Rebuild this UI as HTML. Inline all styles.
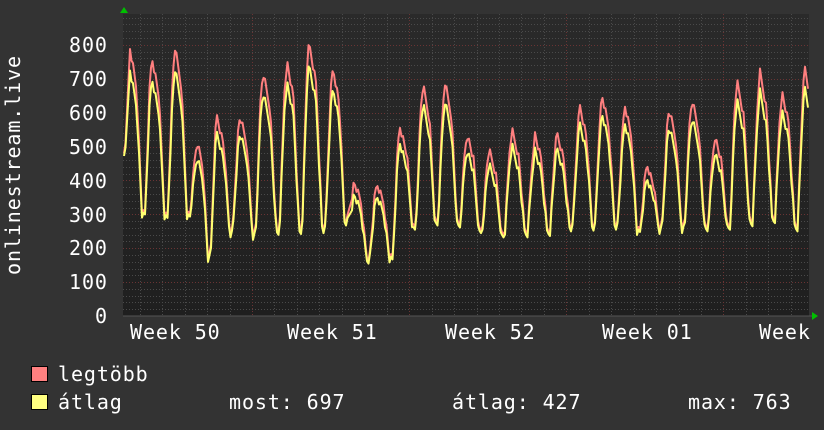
<!DOCTYPE html>
<html><head><meta charset="utf-8">
<style>
html,body{margin:0;padding:0;background:#333;}
body{width:824px;height:430px;overflow:hidden;position:relative;font-family:"DejaVu Sans Mono","Liberation Mono",monospace;color:#fff;}
.t{position:absolute;font-size:20px;line-height:20px;white-space:pre;letter-spacing:0.9px;}
.box{position:absolute;width:15px;height:14px;border:1px solid #000;}
</style></head><body>
<svg id="g" width="824" height="430" style="position:absolute;left:0;top:0">
<defs><linearGradient id="bg" x1="0" y1="0" x2="0" y2="1"><stop offset="0" stop-color="#2a2a2a"/><stop offset="1" stop-color="#1f1f1f"/></linearGradient></defs>
<rect x="123" y="14" width="686" height="302" fill="url(#bg)"/>
<g id="grid"></g>
<path id="red" fill="none" stroke="#ff7f7f" stroke-width="2" stroke-linejoin="round"/>
<path id="yel" fill="none" stroke="#ffff70" stroke-width="2" stroke-linejoin="round"/>
<line x1="123" y1="316" x2="812" y2="316" stroke="#555" stroke-width="1"/>
<polygon points="120,13 128,13 124,7" fill="#00c000"/>
<polygon points="812,312 812,320 818,316" fill="#00c000"/>
</svg>
<div class="t" style="left:3px;top:275px;transform:rotate(-90deg);transform-origin:0 0;">onlinestream.live</div>
<div class="t" style="left:69px;top:35px">800</div>
<div class="t" style="left:69px;top:69px">700</div>
<div class="t" style="left:69px;top:103px">600</div>
<div class="t" style="left:69px;top:137px">500</div>
<div class="t" style="left:69px;top:171px">400</div>
<div class="t" style="left:69px;top:205px">300</div>
<div class="t" style="left:69px;top:238px">200</div>
<div class="t" style="left:69px;top:272px">100</div>
<div class="t" style="left:95px;top:306px">0</div>
<div class="t" style="left:130px;top:322px">Week 50</div>
<div class="t" style="left:287px;top:322px">Week 51</div>
<div class="t" style="left:445px;top:322px">Week 52</div>
<div class="t" style="left:602px;top:322px">Week 01</div>
<div class="t" style="left:759px;top:322px">Week</div>
<div class="box" style="left:31px;top:366px;background:#ff8080"></div>
<div class="box" style="left:31px;top:394px;background:#ffff80"></div>
<div class="t" style="left:58px;top:364px">legtöbb</div>
<div class="t" style="left:58px;top:392px">átlag</div>
<div class="t" style="left:229px;top:392px">most: 697</div>
<div class="t" style="left:452px;top:392px">átlag: 427</div>
<div class="t" style="left:688px;top:392px">max: 763</div>
<script>
(function(){
var ns="http://www.w3.org/2000/svg",g=document.getElementById('grid');
function ln(x1,y1,x2,y2,c,d){var l=document.createElementNS(ns,'line');l.setAttribute('x1',x1);l.setAttribute('y1',y1);l.setAttribute('x2',x2);l.setAttribute('y2',y2);l.setAttribute('stroke',c);l.setAttribute('stroke-width',1);if(d)l.setAttribute('stroke-dasharray',d);g.appendChild(l);}
function Y(v){return 316-v*0.339;}
for(var v=20;v<=880;v+=20){var y=Math.round(Y(v))+0.5;if(y<14)break;ln(123,y,809,y,v%100==0?'#6a3434':'#4a4a4a','1,2');}
var day=22.45;
for(var i=-10;i<40;i++){var x=252+i*day;if(x<124||x>809)continue;var maj=(i%7==0);ln(Math.round(x)+0.5,14,Math.round(x)+0.5,316,maj?'#6a3434':'#4a4a4a','1,2');}
var peaks=[[130,790,300],[152,765,295],[175,790,300],[197,515,175],[217,590,250],[240,590,245],[263,720,250],[287,750,255],[309,805,260],[333,735,285],[354,395,175],[377,390,170],[400,560,260],[423,680,275],[445,690,270],[467,540,250],[489,490,240],[512,550,250],[535,535,255],[557,540,265],[580,620,270],[602,650,275],[625,620,250],[647,450,260],[669,610,265],[692,640,260],[715,530,265],[737,690,280],[760,720,290],[782,660,270],[805,730,700]];
function val(x,k){
 var i=0;while(i<peaks.length-1&&peaks[i+1][0]<=x)i++;
 var p=peaks[i],n=peaks[Math.min(i+1,peaks.length-1)];
 if(x<peaks[0][0]){var t=(peaks[0][0]-x)/5;return peaks[0][1]*k-(peaks[0][1]*k-480)*Math.min(1,t);}
 var span=n[0]-p[0]||22;var t=(x-p[0])/span;
 var pk=p[1]*k,tr=p[2],npk=n[1]*k;
 var v;
 if(t<0.3)v=pk-(pk*0.15)*(t/0.3);
 else if(t<0.55)v=pk*0.85+(tr-pk*0.85)*((t-0.3)/0.25);
 else if(t<0.68)v=tr;
 else if(t<0.9)v=tr+(npk*0.9-tr)*((t-0.68)/0.22);
 else v=npk*0.9+npk*0.1*((t-0.9)/0.1);
 return v+((Math.round(x*2)*7919)%11-5)*2.5;
}
function path(k,off){var d='';for(var x=124;x<=808;x+=1.5){var v=val(x,k)+off;d+=(d?'L':'M')+x.toFixed(1)+','+Y(v).toFixed(1);}return d;}
document.getElementById('red').setAttribute('d',path(1,0));
document.getElementById('yel').setAttribute('d',path(0.93,-8));
})();
</script>
</body></html>
